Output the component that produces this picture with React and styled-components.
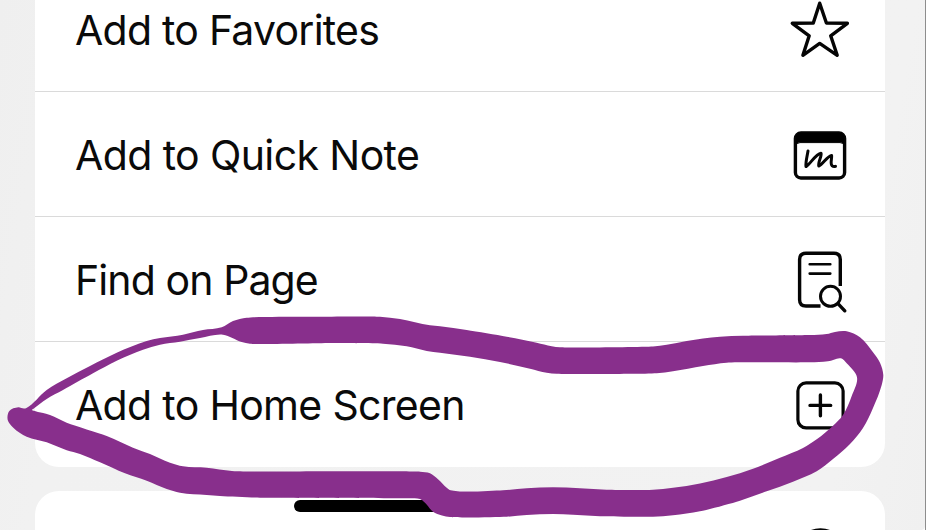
import React from "react";
import styled, { createGlobalStyle } from "styled-components";

const GlobalStyle = createGlobalStyle`
  * { box-sizing: border-box; }
  html, body { margin: 0; padding: 0; overflow: hidden; }
`;

const Screen = styled.main`
  position: relative;
  width: 926px;
  height: 530px;
  overflow: hidden;
  display: flex;
  flex-direction: column;
  gap: 24px;
  padding: 0 41px 0 35px;
  background: linear-gradient(100deg, #efefef 0%, #f1f1f1 12%, #f2f2f2 90%, #f0f0f0 100%);
  border-right: 1px solid #8d8d8d;
  font-family: Inter, "Liberation Sans", sans-serif;
  color: #0a0a0a;
`;

const Card = styled.ul`
  list-style: none;
  margin: ${(p) => (p.$continued ? "-33px 0 0" : "0")};
  padding: 0;
  width: 850px;
  flex: none;
  background: #fff;
  border-radius: ${(p) => (p.$continued ? "0 0 24px 24px" : "24px")};
  overflow: hidden;
`;

const Row = styled.li`
  display: flex;
  align-items: center;
  justify-content: space-between;
  height: 125px;
  padding: ${(p) => (p.$last ? "0" : "2px")} 30px 0 40px;
  border-bottom: ${(p) => (p.$last ? "0" : "1px solid #dadada")};
`;

const Label = styled.span`
  font-size: 41px;
  font-weight: 400;
  line-height: 50px;
  letter-spacing: ${(p) => p.$tracking || "0"};
  white-space: nowrap;
`;

const Icon = styled.svg`
  width: 70px;
  height: 70px;
  flex: none;
  margin-left: auto;
  fill: none;
  stroke: #050505;
  stroke-width: 3.4;
  stroke-linecap: round;
  stroke-linejoin: round;
`;

const HomeIndicator = styled.div`
  position: absolute;
  left: 294px;
  bottom: 18px;
  width: 338px;
  height: 12px;
  border-radius: 6px;
  background: #000;
`;

const Annotation = styled.svg`
  position: absolute;
  inset: 0;
  width: 926px;
  height: 530px;
  fill: #882f8c;
  fill-rule: evenodd;
  pointer-events: none;
`;

const outer = [
  [24,408.6],[26,408.2],[46.7,390],[66.7,378.3],[90,366],[116.7,352.7],[146.7,341],[160,338],[183,334.7],[203,330],[221.7,327.3],[233,321],[246.7,317.7],[320,316.7],[380,316.7],[400,319],[430,325.3],[440,326.3],[466.7,330],[506.7,336.7],[536.7,342.7],[551.7,346.3],[560,347.3],[653,346.5],[666.7,344.7],[686.7,341],[703,338.5],[720,336.7],[743,335.7],[810,335],[826.7,334],[835,331.9],[846.7,331.3],[860,337.3],[873,352.3],[880,362.7],[883.3,375],[881.7,385],[873,408],[863,428],[850,444],[833,459],[816.7,471.3],[793,481.7],[766.7,491.3],[740,500.7],[700,511.3],[673,515.3],[653,516.7],[600,516.3],[573,514.7],[553,514],[526.7,515],[506.7,516.7],[450,517],[442,515.5],[433,511.7],[425,502.7],[420,499],[410,498.3],[260,497.7],[220,496],[206.7,495],[180,492.7],[166.7,489],[146.7,480.7],[125,473.3],[100,462.3],[80,454],[66.7,450.3],[46.7,442.3],[26.7,436.7],[13.3,427.7],[7.7,420],[9.3,411],[18.3,407.3],
];

const inner = [
  [32,409.9],[34,410.7],[50,415],[66.7,422.7],[106.7,436],[133,447.7],[150,454],[170,462.7],[183,466.3],[206.7,467.7],[232,470.9],[270,471.5],[420,471.7],[430,473.3],[438,479.3],[446.7,487.7],[450.7,490.3],[503,490.3],[526.7,488.3],[553,487.3],[580,488.3],[606.7,489.7],[653,489.7],[673,487.7],[700,483.4],[726.7,477],[753,468.7],[780,457.7],[803,448],[816.7,439.3],[833,425.7],[843,415],[851.7,396],[857,377.3],[846.7,363.3],[841,358.3],[828,361.3],[810,362.3],[726.7,362.7],[703,366],[673,371.3],[656.7,373.3],[600,374],[556.7,373.7],[546.7,372.7],[530,368.7],[500,362],[470,356.7],[440,352.7],[426.7,351],[406.7,346.3],[383,343.7],[333,343],[250,343.7],[241.7,342],[223,334.7],[200,338],[180,341.7],[160,344.7],[143,349.7],[116.7,360.7],[93,373.3],[63,390],[46.7,399],[33.5,408.8],
];

// Closed curve through the points; handles scale with each segment so that
// short bends beside long runs do not overshoot.
function closedCurve(points) {
  const n = points.length;
  const dist = (a, b) => Math.hypot(b[0] - a[0], b[1] - a[1]);
  const tangent = (i) => {
    const a = points[(i - 1 + n) % n];
    const p = points[i % n];
    const b = points[(i + 1) % n];
    const ux = (p[0] - a[0]) / dist(a, p) + (b[0] - p[0]) / dist(p, b);
    const uy = (p[1] - a[1]) / dist(a, p) + (b[1] - p[1]) / dist(p, b);
    return [ux / 2, uy / 2];
  };
  let d = `M${points[0][0]} ${points[0][1]}`;
  for (let i = 0; i < n; i++) {
    const p = points[i];
    const q = points[(i + 1) % n];
    const h = Math.min(dist(p, q) / 3, 10);
    const t = tangent(i);
    const s = tangent(i + 1 === n ? 0 : i + 1);
    d += `C${p[0] + t[0] * h} ${p[1] + t[1] * h} ${q[0] - s[0] * h} ${q[1] - s[1] * h} ${q[0]} ${q[1]}`;
  }
  return d + "Z";
}

const markerPath = closedCurve(outer) + closedCurve(inner);

const StarIcon = () => (
  <Icon viewBox="785 -5 70 70">
    <path d="M819.7 3.2 L826.4 23 L847.4 23.3 L830.7 35.8 L837.2 55.3 L819.7 43.4 L802.9 55.3 L809.2 35.8 L792.3 23.3 L813.3 23 Z" />
  </Icon>
);

const QuickNoteIcon = () => (
  <Icon viewBox="785 120 70 70">
    <rect x="795.4" y="133" width="49.2" height="45" rx="5.5" />
    <path fill="#000" strokeWidth="1" d="M795.4 146V138Q795.4 132.4 801 132.4H839Q844.6 132.4 844.6 138V146Q843.5 142.6 840 142.6H800Q796.5 142.6 795.4 146Z" />
    <path strokeWidth="3" d="M808 151C807 157 805.4 162.4 806 166.6C810.4 164 815.6 154 821 153.2C822.4 155 817.6 162.7 818.8 166C822.6 164.7 827.4 155.8 831.6 155.4C832 158.6 830 163.4 832 165.6C833.2 166.8 834.3 166.7 835.5 166.4" />
  </Icon>
);

const FindIcon = () => (
  <Icon viewBox="785 245 70 70">
    <path strokeLinecap="butt" d="M820.5 306H806Q799.6 306 799.6 299.8V259.5Q799.6 253.2 806 253.2H834Q840.3 253.2 840.3 259.5V286" />
    <path strokeWidth="2.6" d="M809.7 264.3H830.3M809.7 273.6H830.3" />
    <circle cx="830.5" cy="296.3" r="10" strokeWidth="3" />
    <path d="M838.2 303.8L844.8 310.8" />
  </Icon>
);

const AddIcon = () => (
  <Icon viewBox="785 370 70 70">
    <rect x="797.9" y="382.9" width="45.2" height="45" rx="8.2" strokeWidth="3.2" />
    <path strokeWidth="3.4" d="M820.4 395V415.7M810 405.4H830.7" />
  </Icon>
);

const CircleIcon = () => (
  <Icon viewBox="785 518 70 70">
    <circle cx="820.5" cy="553.5" r="24.5" />
  </Icon>
);

const actions = [
  { label: "Add to Favorites", Glyph: StarIcon, tracking: "-0.75px" },
  { label: "Add to Quick Note", Glyph: QuickNoteIcon, tracking: "-0.6px" },
  { label: "Find on Page", Glyph: FindIcon, tracking: "-0.9px" },
  { label: "Add to Home Screen", Glyph: AddIcon, tracking: "-0.68px" },
];

export default function App() {
  return (
    <Screen>
      <GlobalStyle />
      <Card $continued>
        {actions.map(({ label, Glyph, tracking }, i) => (
          <Row key={label} $last={i === actions.length - 1}>
            <Label $tracking={tracking}>{label}</Label>
            <Glyph />
          </Row>
        ))}
      </Card>
      <Card>
        <Row $last>
          <CircleIcon />
        </Row>
      </Card>
      <HomeIndicator />
      <Annotation viewBox="0 0 926 530" aria-hidden="true">
        <path d={markerPath} />
        <path fill="#fff" d="M925 527V530H922Q924.5 529.5 925 527Z" />
      </Annotation>
    </Screen>
  );
}
